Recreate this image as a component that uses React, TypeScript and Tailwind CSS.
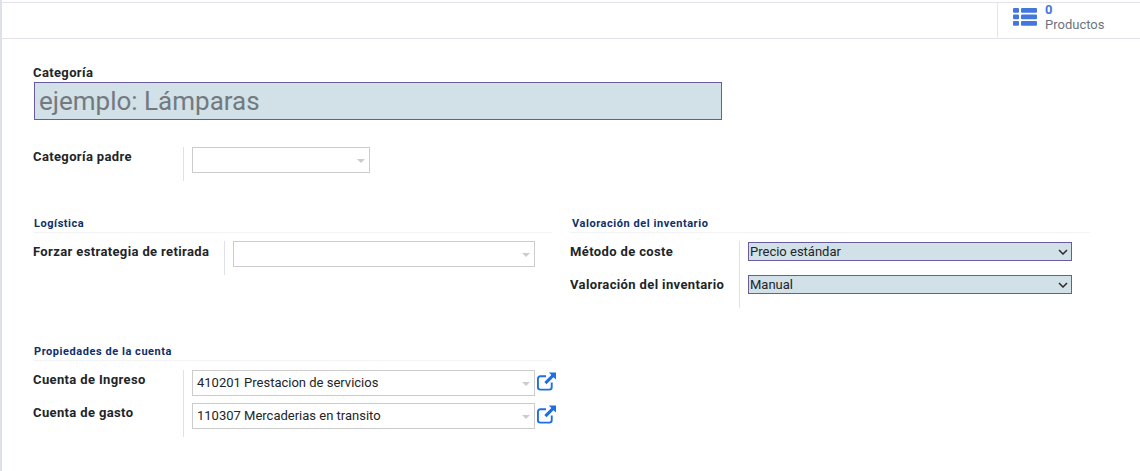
const labelClass = 'text-[13px] leading-[18px] font-bold tracking-[0.37px] text-[#212529] whitespace-nowrap';
const headerClass = 'text-[11px] leading-[18px] font-bold tracking-[0.55px] text-[#0f2f6b] border-b border-[#f1f3f5] h-[18px]';

function Caret() {
  return (
    <svg width="8" height="4" viewBox="0 0 8 4" className="shrink-0 mt-[1px] mr-[1px]">
      <path d="M0 0h8L4 4z" fill="#cccccc" />
    </svg>
  );
}

function Many2One({ value, className }: { value?: string; className: string }) {
  return (
    <div className={`h-[26px] border border-[#ccc] flex items-center justify-between pl-1 pr-[3px] text-[13px] text-[#212529] ${className}`}>
      <span>{value}</span>
      <Caret />
    </div>
  );
}

function ExternalLink() {
  return (
    <svg width="21" height="19" viewBox="0 0 21 20" className="shrink-0">
      <path d="M16 11v5a2.500 2.500 0 0 1-2.500 2.500H4A2.500 2.500 0 0 1 1.500 16V7A2.500 2.500 0 0 1 4 4.500h6" fill="none" stroke="#1f6fe0" strokeWidth="2" />
      <path d="M13 0.500h7.500V8l-2.600-2.600L10.500 12.800l-2.300-2.300 7.400-7.400z" fill="#1f6fe0" />
    </svg>
  );
}

function NativeSelect({ value }: { value: string }) {
  return (
    <div className="relative w-[324px]">
      <select
        defaultValue={value}
        className="block w-full h-[19px] appearance-none border border-[#6a5b9e] bg-[#d2e0e7] text-[13px] leading-[17px] text-[#212529] pl-[1px]"
      >
        <option>{value}</option>
      </select>
      <svg width="10" height="6" viewBox="0 0 10 6" className="absolute right-[4px] top-[7px] pointer-events-none">
        <path d="M1 1l4 4 4-4" fill="none" stroke="#2b2b2b" strokeWidth="1.500" />
      </svg>
    </div>
  );
}

export default function App() {
  return (
    <div className="w-[1140px] h-[471px] overflow-hidden bg-white border-l-2 border-[#dee2e6] pt-[2px] font-['Roboto',sans-serif]">
      {/* barra superior */}
      <div className="h-[37px] border-y border-[#e2e2e8] flex justify-end">
        <div className="w-[143px] border-l border-[#e6e6e6] flex pl-[15px] pt-[5px]">
          <svg width="24" height="18" viewBox="0 0 24 18">
            <g fill="#4377de">
              <rect x="0" y="0" width="6" height="4.700" rx="1" />
              <rect x="8" y="0" width="16" height="4.700" rx="1" />
              <rect x="0" y="6.500" width="6" height="4.700" rx="1" />
              <rect x="8" y="6.500" width="16" height="4.700" rx="1" />
              <rect x="0" y="13" width="6" height="4.700" rx="1" />
              <rect x="8" y="13" width="16" height="4.700" rx="1" />
            </g>
          </svg>
          <div className="ml-[8px] -mt-[6px]">
            <div className="text-[13px] leading-[15px] font-bold text-[#4377de]">0</div>
            <div className="text-[13px] leading-[15px] text-[#6c757d]">Productos</div>
          </div>
        </div>
      </div>

      <div className="pl-[31px] pt-[25px]">
        <div className={labelClass}>Categoría</div>
        <input
          placeholder="ejemplo: Lámparas"
          className="block w-[688px] h-[38px] ml-[1px] px-1 border border-[#6a5b9e] bg-[#d2e0e7] text-[26px] text-[#212529] placeholder:text-[#727a80] outline-none"
        />

        <div className="flex mt-[27px]">
          <div className={`w-[150px] pt-[1px] ${labelClass}`}>Categoría padre</div>
          <div className="border-l border-[#dee2e6] pl-2 h-[34px]">
            <Many2One className="w-[178px]" />
          </div>
        </div>

        {/* Logística / Valoración */}
        <div className="flex mt-[34px]">
          <div className="w-[519px] mr-[18px]">
            <div className={`${headerClass} pl-[1px]`}>Logística</div>
            <div className="flex mt-[8px]">
              <div className={`w-[191px] pt-[2px] ${labelClass}`}>Forzar estrategia de retirada</div>
              <div className="border-l border-[#dee2e6] pl-2 h-[34px]">
                <Many2One className="w-[302px]" />
              </div>
            </div>
          </div>
          <div className="w-[520px]">
            <div className={`${headerClass} pl-[2px]`}>Valoración del inventario</div>
            <div className="flex mt-[8px]">
              <div className="w-[169px]">
                <div className={`pt-[2px] ${labelClass}`}>Método de coste</div>
                <div className={`mt-[15px] ${labelClass}`}>Valoración del inventario</div>
              </div>
              <div className="border-l border-[#dee2e6] pl-2 pt-[1px] h-[67px]">
                <NativeSelect value="Precio estándar" />
                <div className="mt-[14px]">
                  <NativeSelect value="Manual" />
                </div>
              </div>
            </div>
          </div>
        </div>

        {/* Propiedades de la cuenta */}
        <div className="w-[519px] mt-[35px]">
          <div className={`${headerClass} pl-[1px]`}>Propiedades de la cuenta</div>
          <div className="flex mt-[9px]">
            <div className="w-[150px] shrink-0">
              <div className={`pt-[1px] ${labelClass}`}>Cuenta de Ingreso</div>
              <div className={`mt-[15px] ${labelClass}`}>Cuenta de gasto</div>
            </div>
            <div className="border-l border-[#dee2e6] pl-2 h-[67px] shrink-0">
              <div className="flex items-start">
                <Many2One className="w-[343px]" value="410201 Prestacion de servicios" />
                <div className="mt-[2px] ml-[1px]"><ExternalLink /></div>
              </div>
              <div className="flex items-start mt-[7px]">
                <Many2One className="w-[343px]" value="110307 Mercaderias en transito" />
                <div className="mt-[2px] ml-[1px]"><ExternalLink /></div>
              </div>
            </div>
          </div>
        </div>
      </div>
    </div>
  );
}
